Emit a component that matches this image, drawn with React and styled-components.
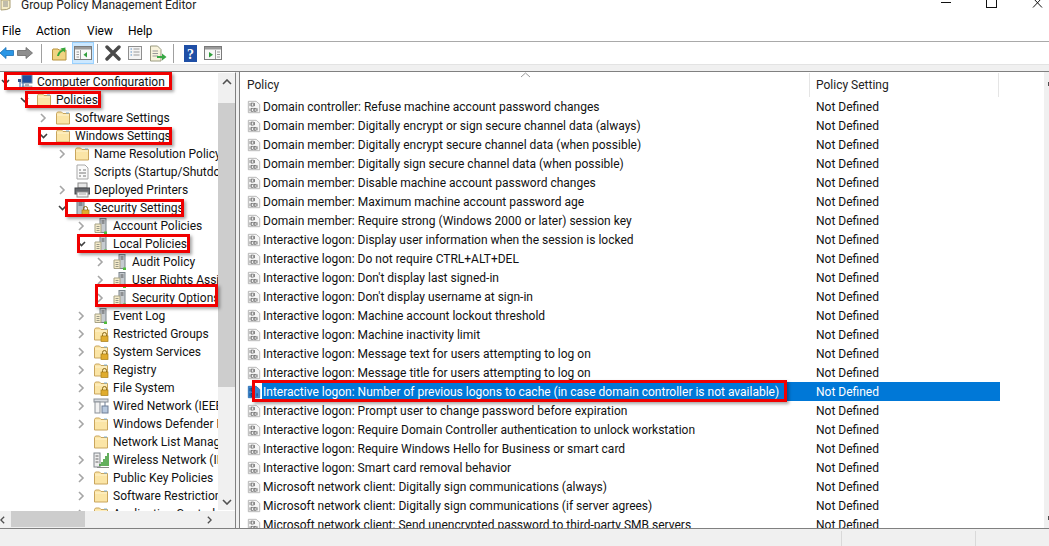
import React from 'react';
import styled, { createGlobalStyle } from 'styled-components';

const uiFont = `'Roboto', 'Noto Sans', sans-serif`;

const GlobalStyle = createGlobalStyle`
  html, body {
    margin: 0;
    padding: 0;
    background: #fff;
  }
  body {
    font-family: ${uiFont};
    font-size: 12px;
    color: #000;
  }
`;

const Window = styled.div`
  position: relative;
  width: 1049px;
  height: 546px;
  display: flex;
  flex-direction: column;
  overflow: hidden;
  background: #fff;
`;

const TitleBar = styled.div`
  height: 11px;
  flex: none;
  display: flex;
  align-items: flex-end;
  overflow: hidden;
  position: relative;
`;

const TitleIcon = styled.svg`
  width: 12px;
  height: 11px;
  flex: none;
`;

const TitleText = styled.div`
  margin-left: 9px;
  margin-bottom: -2px;
  line-height: 15px;
  white-space: nowrap;
  color: #222;
`;

const WindowControls = styled.div`
  margin-left: auto;
  display: flex;
  align-items: flex-end;
  gap: 35px;
  padding-right: 6px;
`;

const MinimizeMark = styled.div`
  width: 10px;
  height: 1px;
  background: #111;
  margin-bottom: 8px;
`;

const MaximizeMark = styled.div`
  width: 9px;
  height: 8px;
  border: 1px solid #111;
  border-top: 0;
  margin-bottom: 3px;
`;

const CloseMark = styled.svg`
  width: 11px;
  height: 8px;
  margin-bottom: 3px;
`;

const MenuBar = styled.div`
  height: 31px;
  flex: none;
  display: flex;
  align-items: center;
  padding: 9px 0 0 2px;
  box-sizing: border-box;
  border-bottom: 1px solid #a9a9a9;
`;

const MenuItem = styled.div`
  width: ${p => p.$w}px;
`;

const Toolbar = styled.div`
  height: 22px;
  flex: none;
  display: flex;
  align-items: center;
  box-sizing: border-box;
`;

const ToolButton = styled.div`
  width: ${p => p.$w || 22}px;
  height: 22px;
  flex: none;
  display: flex;
  align-items: center;
  justify-content: center;
  box-sizing: border-box;
  margin-left: ${p => p.$ml || 0}px;
  ${p => p.$active && `
    background: #cce8ff;
    border: 1px solid #99d1ff;
  `}
`;

const ToolSep = styled.div`
  width: 1px;
  height: 19px;
  flex: none;
  margin: 0 ${p => p.$gap || 5}px;
  background: #a0a0a0;
`;

const Strip = styled.div`
  height: 8px;
  flex: none;
  box-sizing: border-box;
  background: #f0f0f0;
  border-top: 1px solid #e3e3e3;
  border-bottom: 1px solid #808080;
`;

const Panes = styled.div`
  flex: 1;
  min-height: 0;
  display: flex;
  background: #f0f0f0;
`;

const TreePane = styled.div`
  width: 236px;
  flex: none;
  display: grid;
  grid-template-columns: 1fr 17px;
  grid-template-rows: 1fr 17px;
  border-right: 1px solid #808080;
  border-top: 1px solid #fff;
  box-sizing: border-box;
  background: #fff;
  overflow: hidden;
`;

const TreeBody = styled.div`
  overflow: hidden;
  min-width: 0;
  min-height: 0;
`;

const TreeRow = styled.div`
  height: 18px;
  display: flex;
  align-items: center;
  padding-left: ${p => p.$level * 19}px;
  white-space: nowrap;
`;

const Expander = styled.svg`
  width: 14px;
  height: 10px;
  flex: none;
`;

const NodeIcon = styled.svg`
  width: 16px;
  height: 16px;
  flex: none;
  margin-left: 3px;
`;

const NodeLabel = styled.span`
  margin-left: 4px;
  color: #111;
`;

const VScroll = styled.div`
  display: flex;
  flex-direction: column;
  background: #f0f0f0;
  margin-bottom: 1px;
  min-height: 0;
`;

const ScrollEnd = styled.div`
  height: 17px;
  flex: none;
  display: flex;
  align-items: center;
  justify-content: center;
`;

const VThumb = styled.div`
  height: 284px;
  flex: none;
  margin-top: 13px;
  margin-bottom: auto;
  background: #cdcdcd;
`;

const HScroll = styled.div`
  display: flex;
  align-items: stretch;
  background: #f0f0f0;
`;

const HEnd = styled.div`
  width: 5px;
  flex: none;
  display: flex;
  align-items: center;
  justify-content: center;
  margin-left: ${p => p.$right ? 'auto' : '0'};
  margin-right: ${p => p.$right ? '6px' : '0'};
`;

const HThumb = styled.div`
  width: 74px;
  margin-left: 6px;
  background: #cdcdcd;
  margin-bottom: 1px;
`;

const Corner = styled.div`
  background: #f0f0f0;
`;

const ListPane = styled.div`
  flex: 1;
  margin-left: 3px;
  min-width: 0;
  display: flex;
  flex-direction: column;
  border-left: 1px solid #808080;
  background: #fff;
  overflow: hidden;
  position: relative;
`;

const HeaderRow = styled.div`
  height: 25px;
  flex: none;
  display: flex;
  align-items: center;
`;

const HeaderCell = styled.div`
  width: ${p => p.$w}px;
  height: 24px;
  flex: none;
  display: flex;
  align-items: center;
  box-sizing: border-box;
  padding-left: ${p => p.$pad}px;
  border-right: 1px solid #e5e5e5;
  color: #222;
  position: relative;
`;

const SortMark = styled.svg`
  position: absolute;
  left: 280px;
  top: -1px;
  width: 11px;
  height: 6px;
`;

const Rows = styled.div`
  flex: 1;
  overflow: hidden;
`;

const ListRow = styled.div`
  height: 19px;
  width: 760px;
  display: flex;
  align-items: center;
  white-space: nowrap;
`;

const PolicyCell = styled.div`
  width: 570px;
  height: 100%;
  flex: none;
  display: flex;
  align-items: center;
  padding-left: 7px;
  box-sizing: border-box;
`;

const PolicyIcon = styled.svg`
  width: 14px;
  height: 16px;
  flex: none;
`;

const PolicyText = styled.div`
  flex: 1;
  height: 100%;
  margin-left: 1px;
  padding-left: 1px;
  display: flex;
  align-items: center;
  color: ${p => (p.$selected ? '#fff' : '#111')};
  background: ${p => (p.$selected ? '#0078d7' : 'transparent')};
`;

const SettingCell = styled.div`
  flex: 1;
  height: 100%;
  padding-left: 6px;
  display: flex;
  align-items: center;
  color: ${p => (p.$selected ? '#fff' : '#111')};
  background: ${p => (p.$selected ? '#0078d7' : 'transparent')};
`;

// right hand scrollbar, only its first pixels are on screen
const RightScroll = styled.div`
  position: absolute;
  left: 804px;
  top: 0;
  bottom: 0;
  width: 17px;
  padding: 10px 0 8px 4px;
  box-sizing: border-box;
  display: flex;
  flex-direction: column;
  justify-content: space-between;
  background: #f0f0f0;
`;

const RightArrow = styled.div`
  width: 2px;
  height: 4px;
  background: #505050;
`;

const StatusBar = styled.div`
  height: 18px;
  flex: none;
  display: flex;
  border-top: 1px solid #808080;
  background: #f0f0f0;
  box-sizing: border-box;
`;

const StatusCell = styled.div`
  width: ${p => p.$w}px;
  flex: none;
  margin-top: 2px;
  border-right: 1px solid #d9d9d9;
`;

// red annotation boxes drawn on top of the screenshot
const Callout = styled.div`
  position: absolute;
  left: ${p => p.$x}px;
  top: ${p => p.$y}px;
  width: ${p => p.$w}px;
  height: ${p => p.$h}px;
  box-sizing: border-box;
  border: 3px solid #f00000;
  box-shadow: 2px 2px 3px rgba(0, 0, 0, 0.35);
  pointer-events: none;
`;

const Chevron = ({ open }) => (
  <Expander viewBox="0 0 14 10">
    {open ? (
      <path d="M2 3 L5.5 6.5 L9 3" fill="none" stroke="#404040" strokeWidth="1.6" />
    ) : (
      <path d="M3 1 L7 5 L3 9" fill="none" stroke="#a6a6a6" strokeWidth="1.6" />
    )}
  </Expander>
);

const NoChevron = () => <Expander viewBox="0 0 14 10" />;

const FolderShape = () => (
  <>
    <path d="M1.5 3.5 V14 H14.5 V3.5 H8 L6.5 2 H2.5 Z" fill="#fbe5a6" stroke="#c9a55c" />
    <path d="M2 5 H14" stroke="#fff3cf" />
    <path d="M11 3 H14" stroke="#7fb2d8" />
  </>
);

const LockShape = () => (
  <>
    <path d="M9.5 10 V8.5 a2 2 0 0 1 4 0 V10" fill="none" stroke="#8a6a1c" />
    <rect x="8" y="10" width="7" height="5.5" fill="#e0ac2e" stroke="#a77d18" strokeWidth="0.7" />
  </>
);

const icons = {
  computer: (
    <>
      <rect x="5" y="1" width="10" height="8" fill="#1f4f9c" stroke="#70829c" />
      <rect x="8" y="10" width="4" height="2" fill="#aab2bc" />
      <rect x="5" y="12" width="10" height="2" fill="#c4c9cf" stroke="#8a8f96" strokeWidth="0.5" />
      <path d="M3 6 V14 a1.6 1.6 0 0 0 3 0 V8" fill="none" stroke="#4774b3" strokeWidth="1.2" />
      <path d="M1 5 H4 V8 H1 Z" fill="#31508a" />
    </>
  ),
  folder: <FolderShape />,
  lockedFolder: (
    <>
      <FolderShape />
      <LockShape />
    </>
  ),
  scripts: (
    <>
      <path d="M3 1 H11 L14 4 V15 H3 Z" fill="#fafafa" stroke="#a8a8a8" />
      <path d="M5 6 H7 M9 6 H12 M5 9 H12 M5 12 H7 M9 12 H12" stroke="#777" />
    </>
  ),
  printer: (
    <>
      <rect x="4" y="1" width="9" height="5" fill="#e8e8e8" stroke="#888" />
      <rect x="1" y="6" width="15" height="6" fill="#66696e" stroke="#45474a" />
      <rect x="3" y="10" width="11" height="5" fill="#f4f4f4" stroke="#8e8e8e" />
      <path d="M5 12 H12" stroke="#aaa" />
    </>
  ),
  secure: (
    <>
      <rect x="3" y="0.5" width="7" height="15" fill="#b9c0c7" stroke="#6f7880" />
      <path d="M4.5 3 H8.5 M4.5 5 H8.5" stroke="#4d555c" />
      <LockShape />
    </>
  ),
  server: (
    <>
      <rect x="7" y="0.5" width="6" height="14" fill="#c6cbd0" stroke="#7b838a" />
      <path d="M8.5 3 H11.5 M8.5 5 H11.5" stroke="#555" />
      <path d="M2 6 H8 V14.5 H2 Z" fill="#f5eccb" stroke="#a7a285" />
      <path d="M3.5 8.5 H6.5 M3.5 10.5 H6.5 M3.5 12.5 H6.5" stroke="#9a9a8a" />
      <rect x="11" y="13.5" width="3" height="2.5" fill="#4ebd3a" />
    </>
  ),
  wired: (
    <>
      <rect x="1" y="1" width="14" height="3" fill="#d7dbe0" stroke="#8b9198" />
      <rect x="2" y="4" width="5" height="11" fill="#f2f2f2" stroke="#8b9198" />
      <rect x="9" y="8" width="6" height="7" fill="#b7c8de" stroke="#6f7f96" />
      <path d="M12 4 V8" stroke="#6f7f96" />
    </>
  ),
  wireless: (
    <>
      <rect x="1" y="1" width="6" height="14" fill="#eeeeee" stroke="#80868c" />
      <path d="M2.5 4 H5.5 M2.5 7 H5.5 M2.5 10 H5.5" stroke="#666" />
      <path d="M7 14 V12 M9 14 V10 M11 14 V7 M13 14 V4 M15 14 V1" stroke="#3d9b35" strokeWidth="1.6" />
      <path d="M4 15.5 H16" stroke="#8a8a8a" />
    </>
  ),
  policy: (
    <>
      <path d="M1.5 1.5 H10.5 L14.5 5 V14.5 H1.5 Z" fill="#f6f6f6" stroke="#b0b0b0" />
      <path d="M3.5 3.5 V7 M8.5 3.5 V7 M3.5 9.5 V13 M11.5 9.5 V13" stroke="#6e6e6e" />
      <rect x="5.2" y="3.5" width="2" height="3.5" fill="none" stroke="#6e6e6e" strokeWidth="0.8" />
      <rect x="5.2" y="9.5" width="2" height="3.5" fill="none" stroke="#6e6e6e" strokeWidth="0.8" />
      <rect x="8.7" y="9.5" width="1.6" height="3.5" fill="none" stroke="#6e6e6e" strokeWidth="0.8" />
    </>
  ),
  policySelected: (
    <>
      <path d="M1.5 1.5 H10.5 L14.5 5 V14.5 H1.5 Z" fill="#3b86cf" stroke="#2a6fb5" />
      <path d="M3.5 3.5 V7 M8.5 3.5 V7 M3.5 9.5 V13 M11.5 9.5 V13" stroke="#0d3f78" />
      <rect x="5.2" y="3.5" width="2" height="3.5" fill="none" stroke="#0d3f78" strokeWidth="0.8" />
      <rect x="5.2" y="9.5" width="2" height="3.5" fill="none" stroke="#0d3f78" strokeWidth="0.8" />
    </>
  ),
};

const treeNodes = [
  [0, 'open', 'computer', 'Computer Configuration'],
  [1, 'open', 'folder', 'Policies'],
  [2, 'closed', 'folder', 'Software Settings'],
  [2, 'open', 'folder', 'Windows Settings'],
  [3, 'closed', 'folder', 'Name Resolution Policy'],
  [3, 'none', 'scripts', 'Scripts (Startup/Shutdown)'],
  [3, 'closed', 'printer', 'Deployed Printers'],
  [3, 'open', 'secure', 'Security Settings'],
  [4, 'closed', 'server', 'Account Policies'],
  [4, 'open', 'server', 'Local Policies'],
  [5, 'closed', 'server', 'Audit Policy'],
  [5, 'closed', 'server', 'User Rights Assignment'],
  [5, 'closed', 'server', 'Security Options'],
  [4, 'closed', 'server', 'Event Log'],
  [4, 'closed', 'lockedFolder', 'Restricted Groups'],
  [4, 'closed', 'lockedFolder', 'System Services'],
  [4, 'closed', 'lockedFolder', 'Registry'],
  [4, 'closed', 'lockedFolder', 'File System'],
  [4, 'closed', 'wired', 'Wired Network (IEEE 802.3) Policies'],
  [4, 'closed', 'folder', 'Windows Defender Firewall'],
  [4, 'none', 'folder', 'Network List Manager Policies'],
  [4, 'closed', 'wireless', 'Wireless Network (IEEE 802.11) Policies'],
  [4, 'closed', 'folder', 'Public Key Policies'],
  [4, 'closed', 'folder', 'Software Restriction Policies'],
  [4, 'closed', 'folder', 'Application Control Policies'],
];

const policies = [
  'Domain controller: Refuse machine account password changes',
  'Domain member: Digitally encrypt or sign secure channel data (always)',
  'Domain member: Digitally encrypt secure channel data (when possible)',
  'Domain member: Digitally sign secure channel data (when possible)',
  'Domain member: Disable machine account password changes',
  'Domain member: Maximum machine account password age',
  'Domain member: Require strong (Windows 2000 or later) session key',
  'Interactive logon: Display user information when the session is locked',
  'Interactive logon: Do not require CTRL+ALT+DEL',
  "Interactive logon: Don't display last signed-in",
  "Interactive logon: Don't display username at sign-in",
  'Interactive logon: Machine account lockout threshold',
  'Interactive logon: Machine inactivity limit',
  'Interactive logon: Message text for users attempting to log on',
  'Interactive logon: Message title for users attempting to log on',
  'Interactive logon: Number of previous logons to cache (in case domain controller is not available)',
  'Interactive logon: Prompt user to change password before expiration',
  'Interactive logon: Require Domain Controller authentication to unlock workstation',
  'Interactive logon: Require Windows Hello for Business or smart card',
  'Interactive logon: Smart card removal behavior',
  'Microsoft network client: Digitally sign communications (always)',
  'Microsoft network client: Digitally sign communications (if server agrees)',
  'Microsoft network client: Send unencrypted password to third-party SMB servers',
];

const callouts = [
  [4, 72, 168, 18],
  [25, 91, 76, 17],
  [38, 127, 134, 18],
  [65, 199, 119, 18],
  [77, 234, 113, 19],
  [95, 284, 123, 23],
  [252, 380, 535, 22],
];

const Tool = ({ w = 20, h = 20, children }) => (
  <svg width={w} height={h} viewBox={`0 0 ${w} ${h}`}>{children}</svg>
);

export default function App() {
  return (
    <Window>
      <GlobalStyle />
      <TitleBar>
        <TitleIcon viewBox="0 0 12 11">
          <path d="M1 0 H10 V8 Q8 10 1 10 Z" fill="#f6edc8" stroke="#a99d72" />
          <path d="M3 2 H8 M3 4 H8 M3 6 H8" stroke="#8c8c8c" />
        </TitleIcon>
        <TitleText>Group Policy Management Editor</TitleText>
        <WindowControls>
          <MinimizeMark />
          <MaximizeMark />
          <CloseMark viewBox="0 0 11 8">
            <path d="M1 -2 L10 7.5 M10 -2 L1 7.5" stroke="#111" fill="none" />
          </CloseMark>
        </WindowControls>
      </TitleBar>

      <MenuBar>
        <MenuItem $w={34}>File</MenuItem>
        <MenuItem $w={51}>Action</MenuItem>
        <MenuItem $w={41}>View</MenuItem>
        <MenuItem $w={40}>Help</MenuItem>
      </MenuBar>

      <Toolbar>
        <ToolButton $w={14}>
          <Tool w={14} h={14}>
            <path d="M0 7 L6 1.5 V4.5 H13.5 V9.5 H6 V12.5 Z" fill="#2b97e6" stroke="#1c6fb4" strokeWidth="0.8" />
          </Tool>
        </ToolButton>
        <ToolButton $w={22}>
          <Tool w={16} h={14}>
            <path d="M15.5 7 L9 1.5 V4.5 H0.5 V9.5 H9 V12.5 Z" fill="#8e8e8e" stroke="#6a6a6a" strokeWidth="0.8" />
          </Tool>
        </ToolButton>
        <ToolSep $gap={5} />
        <ToolButton $w={24}>
          <Tool w={15} h={15}>
            <path d="M0.5 4 V14 H14 V4 H7 L6 3 H1 Z" fill="#f1d483" stroke="#b8933e" />
            <path d="M5 10 Q6 5 10 4 L8.5 2.5 L13.5 1.5 L13 6.5 L11.5 5 Q8 6 7 10 Z" fill="#35a83a" />
          </Tool>
        </ToolButton>
        <ToolButton $w={22} $ml={1} $active>
          <Tool w={18} h={16}>
            <rect x="0.5" y="1.5" width="17" height="13" fill="#f8f8f8" stroke="#7a7a7a" />
            <rect x="1" y="2" width="16" height="2.5" fill="#9a9a9a" />
            <path d="M6.5 5 V14" stroke="#9a9a9a" />
            <path d="M2.5 7 H5 M2.5 9.5 H5 M2.5 12 H5" stroke="#9a9a9a" />
            <path d="M13 7 V12.5 L9.5 9.7 Z" fill="#2f9e3c" />
          </Tool>
        </ToolButton>
        <ToolSep $gap={3} />
        <ToolButton $w={22} $ml={1}>
          <Tool w={16} h={16}>
            <path d="M2 2 L14 14 M14 2 L2 14" stroke="#4a4a4a" strokeWidth="3.4" strokeLinecap="round" />
          </Tool>
        </ToolButton>
        <ToolButton $w={22}>
          <Tool w={16} h={16}>
            <rect x="1.5" y="1.5" width="13" height="13" fill="#f4f4f4" stroke="#8e8e8e" />
            <path d="M3.5 4 H5 M3.5 7 H5 M3.5 10 H5" stroke="#5a8fc4" />
            <path d="M6.5 4 H12.5 M6.5 7 H12.5 M6.5 10 H12.5" stroke="#9a9a9a" />
          </Tool>
        </ToolButton>
        <ToolButton $w={24}>
          <Tool w={18} h={17}>
            <path d="M1.5 1 H8.5 L12 4.5 V16 H1.5 Z" fill="#f8f3dc" stroke="#9a9a80" />
            <path d="M3.5 6 H9 M3.5 8.5 H9 M3.5 11 H9" stroke="#9a9a9a" />
            <path d="M8 11 H13 V8.5 L17.5 12 L13 15.5 V13 H8 Z" fill="#39a845" />
          </Tool>
        </ToolButton>
        <ToolSep $gap={3} />
        <ToolButton $w={22} $ml={2}>
          <Tool w={13} h={17}>
            <rect width="13" height="17" fill="#1f4fa6" />
            <text x="6.5" y="13.5" textAnchor="middle" fontSize="14" fontWeight="700" fontFamily="'Liberation Serif', serif" fill="#fff">?</text>
          </Tool>
        </ToolButton>
        <ToolButton $w={22} $ml={1}>
          <Tool w={18} h={16}>
            <rect x="0.5" y="1.5" width="17" height="13" fill="#f8f8f8" stroke="#7a7a7a" />
            <rect x="1" y="2" width="16" height="2.5" fill="#9a9a9a" />
            <path d="M11.5 5 V14" stroke="#9a9a9a" />
            <path d="M13 7 H16 M13 9.5 H16 M13 12 H16" stroke="#9a9a9a" />
            <path d="M5 7 V12.5 L9 9.7 Z" fill="#2f9e3c" />
          </Tool>
        </ToolButton>
      </Toolbar>

      <Strip />

      <Panes>
        <TreePane>
          <TreeBody>
            {treeNodes.map(([level, state, icon, label]) => (
              <TreeRow key={label} $level={level}>
                {state === 'none' ? <NoChevron /> : <Chevron open={state === 'open'} />}
                <NodeIcon viewBox="0 0 16 16">{icons[icon]}</NodeIcon>
                <NodeLabel>{label}</NodeLabel>
              </TreeRow>
            ))}
          </TreeBody>
          <VScroll>
            <ScrollEnd>
              <svg width="10" height="6" viewBox="0 0 10 6">
                <path d="M1 5 L5 1 L9 5" fill="none" stroke="#505050" strokeWidth="1.6" />
              </svg>
            </ScrollEnd>
            <VThumb />
            <ScrollEnd>
              <svg width="10" height="6" viewBox="0 0 10 6">
                <path d="M1 1 L5 5 L9 1" fill="none" stroke="#505050" strokeWidth="1.6" />
              </svg>
            </ScrollEnd>
          </VScroll>
          <HScroll>
            <HEnd>
              <svg width="6" height="10" viewBox="0 0 6 10">
                <path d="M5 1 L1 5 L5 9" fill="none" stroke="#505050" strokeWidth="1.6" />
              </svg>
            </HEnd>
            <HThumb />
            <HEnd $right>
              <svg width="6" height="10" viewBox="0 0 6 10">
                <path d="M1 1 L5 5 L1 9" fill="none" stroke="#505050" strokeWidth="1.6" />
              </svg>
            </HEnd>
          </HScroll>
          <Corner />
        </TreePane>

        <ListPane>
          <HeaderRow>
            <HeaderCell $w={570} $pad={7}>
              Policy
              <SortMark viewBox="0 0 11 6">
                <path d="M1 5 L5.5 1 L10 5" fill="none" stroke="#9a9a9a" />
              </SortMark>
            </HeaderCell>
            <HeaderCell $w={189} $pad={6}>Policy Setting</HeaderCell>
          </HeaderRow>
          <Rows>
            {policies.map((name, i) => {
              const selected = i === 15;
              return (
                <ListRow key={name}>
                  <PolicyCell>
                    <PolicyIcon viewBox="0 0 16 16">
                      {selected ? icons.policySelected : icons.policy}
                    </PolicyIcon>
                    <PolicyText $selected={selected}>{name}</PolicyText>
                  </PolicyCell>
                  <SettingCell $selected={selected}>Not Defined</SettingCell>
                </ListRow>
              );
            })}
          </Rows>
          <RightScroll>
            <RightArrow />
            <RightArrow />
          </RightScroll>
        </ListPane>
      </Panes>

      <StatusBar>
        <StatusCell $w={841} />
        <StatusCell $w={133} />
      </StatusBar>

      {callouts.map(([x, y, w, h]) => (
        <Callout key={`${x}-${y}`} $x={x} $y={y} $w={w} $h={h} />
      ))}
    </Window>
  );
}
